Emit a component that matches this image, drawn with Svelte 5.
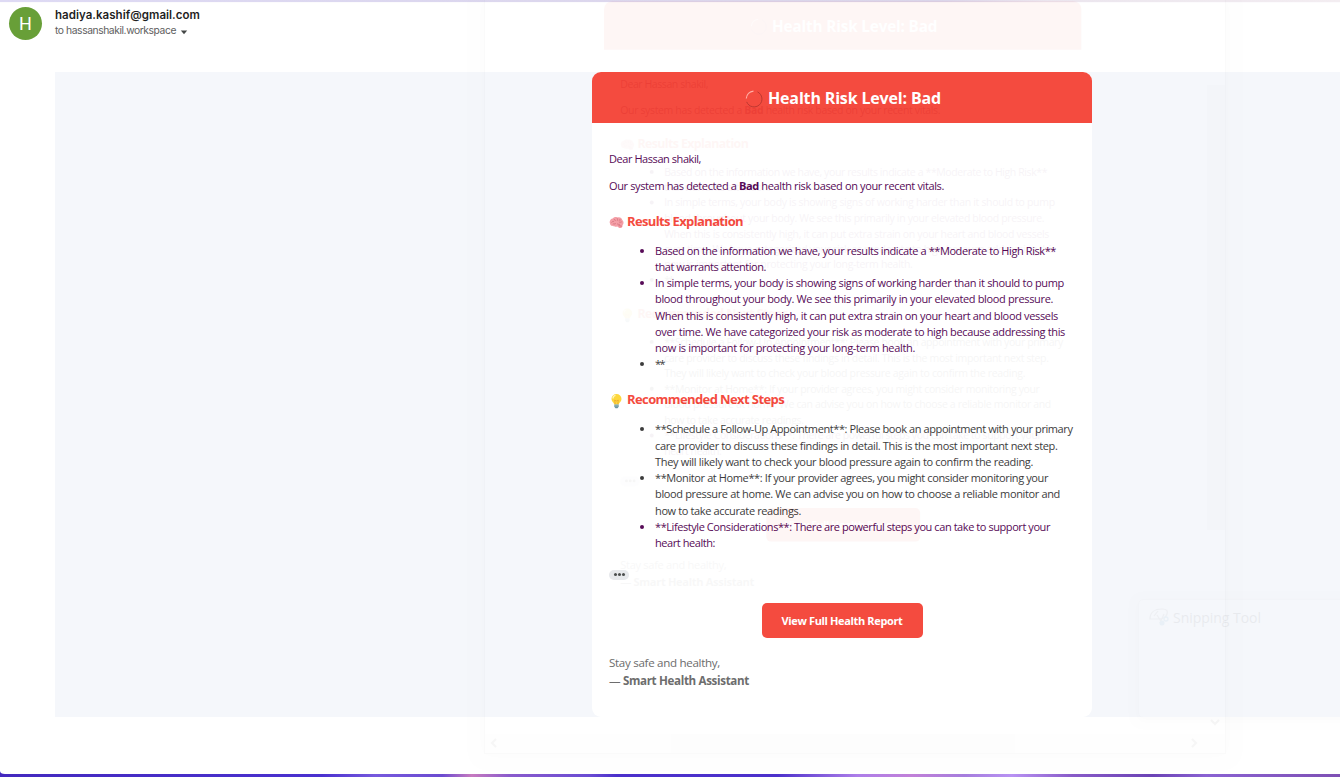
<script>
  const purple = '#500050';
  const gray = '#333333';

  const results = [
    { color: purple, lines: [['Based on the information we have, your results indicate a **Moderate to High Risk**', 401], ['that warrants attention.', 111]] },
    {
      color: purple,
      lines: [
        ['In simple terms, your body is showing signs of working harder than it should to pump', 409],
        ['blood throughout your body. We see this primarily in your elevated blood pressure.', 398],
        ['When this is consistently high, it can put extra strain on your heart and blood vessels', 403],
        ['over time. We have categorized your risk as moderate to high because addressing this', 410],
        ['now is important for protecting your long-term health.', 260]
      ]
    },
    { color: gray, lines: [['**', 9]] }
  ];

  const steps = [
    {
      color: gray,
      lines: [
        ['**Schedule a Follow-Up Appointment**: Please book an appointment with your primary', 417.5],
        ['care provider to discuss these findings in detail. This is the most important next step.', 402.5],
        ['They will likely want to check your blood pressure again to confirm the reading.', 378]
      ]
    },
    {
      color: gray,
      lines: [
        ['**Monitor at Home**: If your provider agrees, you might consider monitoring your', 393],
        ['blood pressure at home. We can advise you on how to choose a reliable monitor and', 405],
        ['how to take accurate readings.', 146]
      ]
    },
    {
      color: purple,
      lines: [
        ['**Lifestyle Considerations**: There are powerful steps you can take to support your', 395],
        ['heart health:', 60]
      ]
    }
  ];

  // Spreads letter spacing so that a line occupies the given measure.
  function fit(node, width) {
    node.style.letterSpacing = '0px';
    const natural = node.offsetWidth ? parseFloat(getComputedStyle(node).width) : 0;
    const count = node.textContent.length;
    if (natural && count > 1) node.style.letterSpacing = `${(width - natural) / count}px`;
  }
</script>

{#snippet list(items)}
  <ul>
    {#each items as item}
      <li style:color={item.color}>
        {#each item.lines as [text, width]}
          <div class="line"><span class="fit" use:fit={width}>{text}</span></div>
        {/each}
      </li>
    {/each}
  </ul>
{/snippet}

{#snippet card()}
  <div class="card">
    <header>
      <svg class="ring" width="18" height="20" viewBox="0 0 18 20">
        <path d="M12.500 2.900a7.900 7.900 0 1 1-10.800 10" fill="none" stroke="#b92f28" stroke-width="1" />
        <path d="M1.300 9.500C1.600 5.500 4.600 2.500 8.500 2.100" fill="none" stroke="#ffaaa0" stroke-width="1.200" />
      </svg>
      <h1><span class="fit" use:fit={173}>Health Risk Level: Bad</span></h1>
    </header>
    <div class="body">
      <p><span class="fit" use:fit={92}>Dear Hassan shakil,</span></p>
      <p class="next"><span class="fit" use:fit={335}>Our system has detected a <b>Bad</b> health risk based on your recent vitals.</span></p>
      <h2>
        <svg width="15" height="14" viewBox="0 0 15 14">
          <path d="M1 7.5C-.2 4.8 2 2.6 3.7 2.4 5.4.4 8.2.8 9 1.4c2-.5 4 1 4.3 2.6 1.6 1.5 1.7 4 .2 5.2.3 2-1.4 3.3-3.3 2.8L8.4 10.4C6 11 4.6 10.6 4 9.8 2.4 10.2 1.2 9 1 7.5Z" fill="#f49aa2" />
          <path d="M2.5 6.5c1-1.4 2-.6 2.7-1.6M4.8 3c.5 1 1.6.6 2 1.7M8.3 2.2c-.4 1 .8 1.4.4 2.6M11.2 3c-.9.8.2 1.6-.8 2.4M12.8 5.8c-1.2-.1-1.6 1-2.5 1M3.8 8.3c1-1 1.8.3 3-.8M8 7.6c.8 1 2 .5 3 1.3M9.5 9.6l3.3.6" fill="none" stroke="#cf6874" stroke-width=".8" />
        </svg>
        <span class="fit" use:fit={116}>Results Explanation</span>
      </h2>
      {@render list(results)}
      <h2 class="second">
        <svg width="15" height="16" viewBox="0 0 15 16">
          <path d="M7.5 1a5 5 0 0 0-5 5c0 2.6 2.4 3.4 2.7 5.5h4.6C10.1 9.400 12.500 8.600 12.500 6a5 5 0 0 0-5-5Z" fill="#fdd633" />
          <path d="M4 5.500C4 3.700 5.100 2.500 6.500 2.300" fill="none" stroke="#fff6b5" stroke-width="1.300" />
          <path d="M6.200 11 5.700 7l1.800 1 1.800-1-.5 4" fill="none" stroke="#e89b22" stroke-width=".7" />
          <path d="M5.300 11.500h4.400v2.300l-1.200 1.500h-2l-1.200-1.500Z" fill="#62909c" />
          <path d="M5.300 12.900h4.400" stroke="#b7ced2" stroke-width=".6" />
        </svg>
        <span class="fit" use:fit={157}>Recommended Next Steps</span>
      </h2>
      {@render list(steps)}
      <div class="more"><i></i><i></i><i></i></div>
      <div class="action"><a class="button" href="#report"><span class="fit" use:fit={121}>View Full Health Report</span></a></div>
      <div class="sign">
        <div><span class="fit" use:fit={111}>Stay safe and healthy,</span></div>
        <div><span class="fit" use:fit={140}>— <b>Smart Health Assistant</b></span></div>
      </div>
    </div>
  </div>
{/snippet}

<main>
  <div class="topline"></div>
  <div class="sender">
    <div class="avatar">H</div>
    <div class="who">
      <div class="name"><span class="fit" use:fit={145}>hadiya.kashif@gmail.com</span></div>
      <div class="to">
        <span class="fit" use:fit={121}>to hassanshakil.workspace</span>
        <svg width="8" height="5" viewBox="0 0 8 5"><path d="M.8.600h6.400L4 4.200Z" fill="#444746" /></svg>
      </div>
    </div>
  </div>
  <section class="mail">{@render card()}</section>
  <div class="taskbar">
    <svg width="5" height="6" viewBox="0 0 5 6"><path d="M0 0C0 2 2 3 5 3v3H0Z" fill="#4329be" /></svg>
  </div>

  <div class="ghost" aria-hidden="true">
    <div class="vbar"></div>
    <div class="hbar"></div>
    <svg class="chev left" width="7" height="10" viewBox="0 0 7 10"><path d="M6 1 2 5l4 4" /></svg>
    <svg class="chev right" width="7" height="10" viewBox="0 0 7 10"><path d="m1 1 4 4-4 4" /></svg>
    <svg class="chev down" width="10" height="7" viewBox="0 0 10 7"><path d="m1 1 4 4 4-4" /></svg>
    <div class="copy">{@render card()}</div>
  </div>
  <div class="snip" aria-hidden="true">
    <svg width="20" height="20" viewBox="0 0 20 20">
      <path d="M1 12C1 5 6 2 13 2c5 0 6 2 5 5s-4 5-8 5H1Zm4-3 4-5M8 8l5 8M15 7l-4 9" fill="none" stroke="#777" stroke-width="1.200" />
      <circle cx="13" cy="16" r="2.500" fill="#2f8fc0" /><circle cx="17" cy="12" r="2" fill="none" stroke="#2f8fc0" stroke-width="1.300" />
    </svg>
    <span class="fit" use:fit={88}>Snipping Tool</span>
  </div>
</main>

<style>
  :global(body) {
    background: #fff;
  }
  main {
    position: relative;
    width: 1340px;
    height: 777px;
    overflow: hidden;
    display: flex;
    flex-direction: column;
    background: #fff;
    font-family: 'Open Sans', 'Noto Sans', sans-serif;
    font-stretch: 94%;
  }
  .fit {
    display: inline-block;
    white-space: nowrap;
  }
  .topline {
    height: 2px;
    flex: none;
    background: linear-gradient(90deg, #dedaf4, #d9d3e9 70%, #ebe4ee 78%, #f3edf1);
    box-shadow: 0 0 1px #ddd8e8;
  }
  .sender {
    height: 70px;
    flex: none;
    display: flex;
    padding: 5px 0 0 9px;
    box-sizing: border-box;
    gap: 13px;
  }
  .avatar {
    width: 33px;
    height: 33px;
    border-radius: 50%;
    background: #689f38;
    color: #fff;
    font: 18px/33px Roboto, sans-serif;
    text-align: center;
  }
  .name {
    height: 16px;
    font: 600 11.5px/16px Inter, sans-serif;
    color: #1f1f1f;
  }
  .to {
    display: flex;
    align-items: center;
    gap: 4px;
    height: 15px;
    font: 10.3px/15px Inter, sans-serif;
    color: #5e5e5e;
  }
  .to svg {
    margin-top: 3px;
  }
  .mail {
    margin-left: 55px;
    padding-left: 537px;
    height: 645px;
    flex: none;
    background: #f5f7fb;
  }
  .taskbar {
    margin-top: auto;
    height: 3px;
    flex: none;
    display: flex;
    align-items: flex-end;
    background: linear-gradient(90deg, #4329be, #4a31cf 24%, #7659dd 28%, #6b4bd0 33%, #c77abf 35.200%, #8a5bcc 38%, #6a4cd3 44%, #4b30cb 46%, #4c31cb 58%, #ad7ee9 64%, #c180d8 68%, #a57ddd 72%, #b892f3 75.500%, #885bc8 80%, #6b43b5 86%, #8a62d2 90%, #7e50b4);
  }
  .taskbar svg {
    flex: none;
  }
  .card {
    width: 500px;
    height: 645px;
    border-radius: 9px;
    overflow: hidden;
    background: #fff;
    color: #500050;
  }
  header {
    height: 51px;
    display: flex;
    align-items: center;
    justify-content: center;
    gap: 5px;
    background: #f44336;
    color: #fff;
    padding-left: 2px;
    box-sizing: border-box;
  }
  .ring {
    margin-top: 3px;
  }
  h1 {
    margin: 0;
    font-size: 16px;
    line-height: 24px;
    font-weight: 700;
  }
  .body {
    padding: 28px 17px 0;
    font-size: 11px;
    line-height: 16px;
  }
  p {
    margin: 0;
    height: 16px;
  }
  .next {
    margin-top: 11px;
  }
  h2 {
    display: flex;
    align-items: center;
    gap: 3px;
    margin: 17px 0 9.600px;
    height: 22px;
    font-size: 13px;
    line-height: 22px;
    color: #f44336;
  }
  h2 .fit {
    margin-top: -2px;
  }
  h2 svg {
    flex: none;
    margin-top: 2px;
  }
  h2.second {
    margin: 16.400px 0 10.500px;
  }
  ul {
    margin: 0;
    padding: 0 0 0 46px;
    list-style: none;
  }
  li {
    position: relative;
  }
  li::before {
    content: '';
    position: absolute;
    left: -15px;
    top: 6px;
    width: 4px;
    height: 4px;
    border-radius: 50%;
    background: currentColor;
  }
  .line {
    height: 16.250px;
    line-height: 16.250px;
  }
  .more {
    margin-top: 18.500px;
    width: 20px;
    height: 10px;
    border-radius: 5px;
    background: #e6e8ec;
    display: flex;
    align-items: center;
    justify-content: center;
    gap: 1px;
  }
  .more i {
    width: 3px;
    height: 3px;
    border-radius: 50%;
    background: #444746;
  }
  .action {
    margin-top: 23px;
    display: flex;
    justify-content: center;
  }
  .button {
    width: 161px;
    height: 35px;
    border-radius: 5px;
    background: #f44336;
    color: #fff;
    font-weight: 700;
    font-size: 11px;
    line-height: 35px;
    text-align: center;
    text-decoration: none;
  }
  .sign {
    margin-top: 16px;
    font-size: 11.600px;
    line-height: 18px;
    color: #666;
  }
  .sign div {
    height: 18px;
  }
  .ghost {
    position: absolute;
    left: 484px;
    top: 0;
    width: 742px;
    height: 754px;
    box-sizing: border-box;
    border: solid #999;
    border-width: 0 1px 1px;
    background: #fff;
    opacity: 0.045;
    box-shadow: 0 0 14px 2px #ccc;
  }
  .copy {
    position: absolute;
    left: 119px;
    top: 0.600px;
    transform: scale(0.955);
    transform-origin: 0 0;
  }
  .vbar {
    position: absolute;
    right: 0;
    top: 85px;
    width: 18px;
    height: 445px;
    background: #ddd;
  }
  .hbar {
    position: absolute;
    left: 0;
    bottom: 0;
    width: 100%;
    height: 19px;
    background: linear-gradient(90deg, #eee 0 186px, #ddd 186px 530px, #eee 530px);
  }
  .chev {
    position: absolute;
    fill: none;
    stroke: #444;
    stroke-width: 2;
  }
  .left {
    left: 5px;
    bottom: 5px;
  }
  .right {
    right: 27px;
    bottom: 5px;
  }
  .down {
    right: 5px;
    bottom: 27px;
  }
  .snip {
    position: absolute;
    left: 1138px;
    top: 599px;
    width: 220px;
    height: 119px;
    display: flex;
    align-items: flex-start;
    gap: 4px;
    padding: 7px 0 0 10px;
    box-sizing: border-box;
    border: 1px solid #ccc;
    border-radius: 5px;
    box-shadow: 0 2px 10px #bbb;
    opacity: 0.055;
    color: #222;
    font-size: 14px;
    line-height: 22px;
  }
</style>
